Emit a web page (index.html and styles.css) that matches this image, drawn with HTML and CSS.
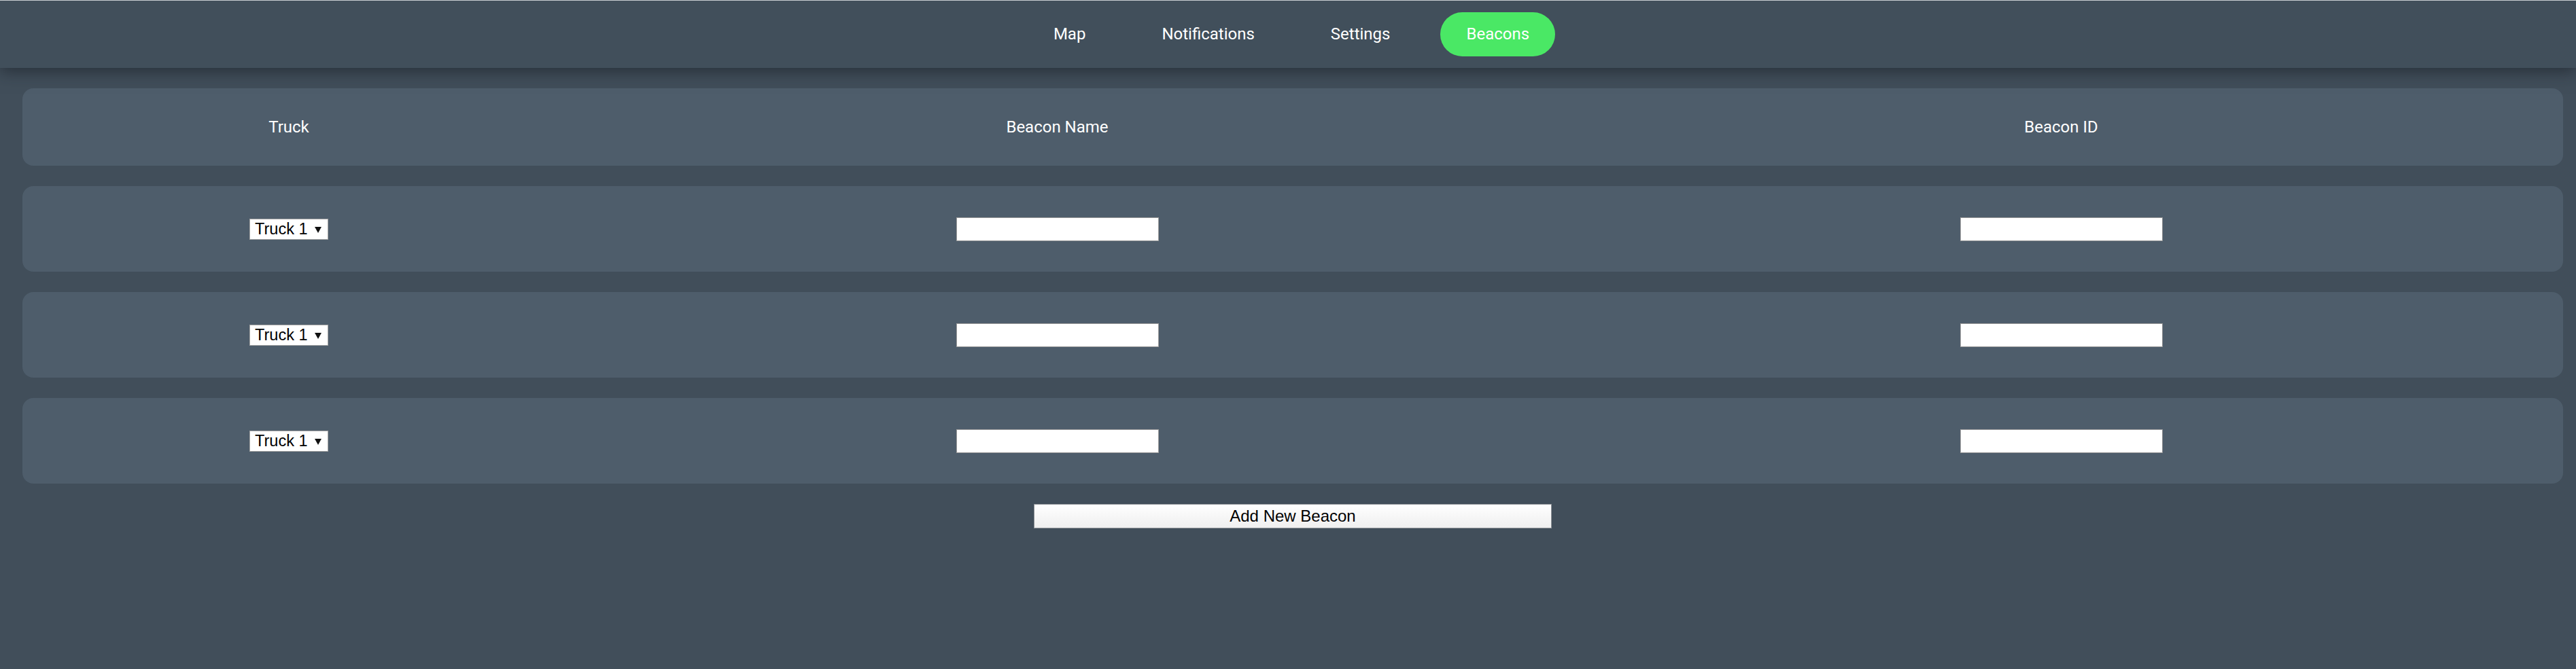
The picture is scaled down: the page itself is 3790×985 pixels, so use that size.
FILE: index.html
```html
<!DOCTYPE html>
<html lang="en">
<head>
<meta charset="utf-8">
<title>Beacons</title>
<link rel="stylesheet" href="styles.css">
</head>
<body>
<nav class="navbar">
  <a class="nav-link" href="#">Map</a>
  <a class="nav-link" href="#">Notifications</a>
  <a class="nav-link" href="#">Settings</a>
  <a class="nav-link active" href="#">Beacons</a>
</nav>
<main class="content">
  <div class="card header-card">
    <div class="cell">Truck</div>
    <div class="cell">Beacon Name</div>
    <div class="cell">Beacon ID</div>
  </div>
  <div class="card row-card">
    <div class="cell"><span class="select-wrap"><select class="truck-select"><option>Truck 1</option></select></span></div>
    <div class="cell"><input class="text-input" type="text"></div>
    <div class="cell"><input class="text-input" type="text"></div>
  </div>
  <div class="card row-card">
    <div class="cell"><span class="select-wrap"><select class="truck-select"><option>Truck 1</option></select></span></div>
    <div class="cell"><input class="text-input" type="text"></div>
    <div class="cell"><input class="text-input" type="text"></div>
  </div>
  <div class="card row-card">
    <div class="cell"><span class="select-wrap"><select class="truck-select"><option>Truck 1</option></select></span></div>
    <div class="cell"><input class="text-input" type="text"></div>
    <div class="cell"><input class="text-input" type="text"></div>
  </div>
  <div class="actions">
    <button class="add-btn" type="button">Add New Beacon</button>
  </div>
</main>
</body>
</html>
```
FILE: styles.css
```css
html, body {
  margin: 0;
  padding: 0;
}
body {
  background: #414e5a;
  min-height: 985px;
  font-family: Roboto, "Liberation Sans", sans-serif;
  color: #ffffff;
  border-top: 1px solid #c9ced3;
  box-sizing: border-box;
}
.navbar {
  height: 99px;
  background: #414f5b;
  display: flex;
  align-items: center;
  justify-content: center;
  gap: 36px;
  padding: 0 21px 0 31px;
  box-shadow: 0 6px 22px rgba(20, 26, 32, 0.55);
  position: relative;
  z-index: 1;
}
.nav-link {
  color: #ffffff;
  text-decoration: none;
  font-size: 24px;
  line-height: 65px;
  height: 65px;
  padding: 0 38px;
  border-radius: 33px;
}
.nav-link.active {
  background: #4ae865;
}
.content {
  padding: 30px 19px 0 33px;
  display: flex;
  flex-direction: column;
  gap: 30px;
}
.card {
  background: #4e5d6b;
  border-radius: 16px;
  display: grid;
  grid-template-columns: 784fr 1477fr 1477fr;
  align-items: center;
}
.header-card {
  height: 114px;
  font-size: 24px;
  line-height: 24px;
}
.row-card {
  height: 126px;
}
.cell {
  display: flex;
  justify-content: center;
  align-items: center;
}
.select-wrap {
  position: relative;
  display: inline-block;
}
.select-wrap::after {
  content: "";
  position: absolute;
  right: 10px;
  top: 12px;
  width: 0;
  height: 0;
  border-left: 5px solid transparent;
  border-right: 5px solid transparent;
  border-top: 9px solid #111;
  pointer-events: none;
}
.truck-select {
  appearance: none;
  -webkit-appearance: none;
  box-sizing: border-box;
  width: 116px;
  height: 31px;
  margin: 0;
  padding: 0 0 0 7px;
  border: 1px solid #a5a5a5;
  border-radius: 0;
  background: #ffffff;
  color: #000000;
  font-family: "Liberation Sans", Arial, sans-serif;
  font-size: 23.5px;
  line-height: 29px;
}
.text-input {
  box-sizing: border-box;
  width: 298px;
  height: 35px;
  margin: 0;
  padding: 0 4px;
  border: 1px solid #9b9b9b;
  background: #ffffff;
  font-family: "Liberation Sans", Arial, sans-serif;
  font-size: 22px;
}
.actions {
  display: flex;
  justify-content: center;
}
.add-btn {
  box-sizing: border-box;
  width: 762px;
  height: 36px;
  margin: 0;
  padding: 0;
  border: 1px solid #8e9297;
  border-radius: 0;
  background: linear-gradient(#ffffff, #efefef);
  color: #000000;
  font-family: "Liberation Sans", Arial, sans-serif;
  font-size: 24px;
  line-height: 34px;
}
```
